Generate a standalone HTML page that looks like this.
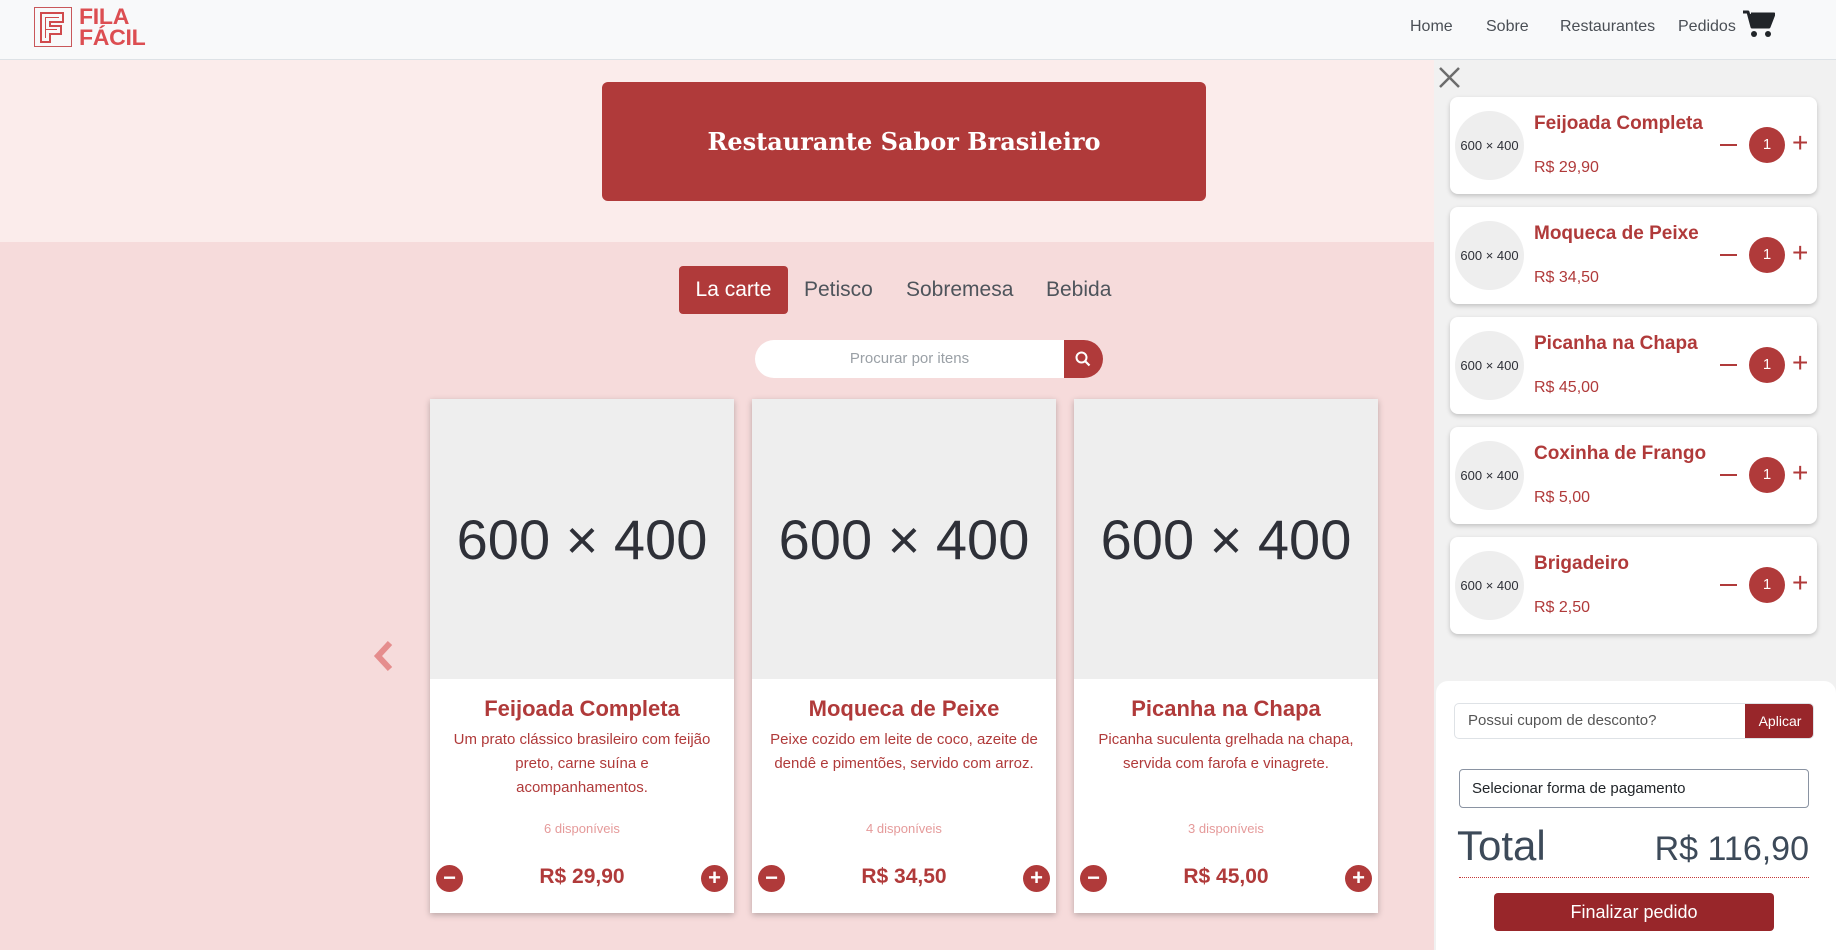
<!DOCTYPE html>
<html><head><meta charset="utf-8"><style>
*{box-sizing:border-box;margin:0;padding:0}
body{width:1836px;height:950px;overflow:hidden;font-family:"Liberation Sans",sans-serif;background:#f6dbdb;position:relative}
.abs{position:absolute}
.nav{left:0;top:0;width:1836px;height:60px;background:#f8f9fa;border-bottom:1px solid #dde2e6}
.nav a{position:absolute;top:18px;font-size:16px;color:#4a4f55}
.hero{left:0;top:60px;width:1434px;height:182px;background:#fbeceb}
.title{left:602px;top:82px;width:604px;height:119px;background:#b03a3a;border-radius:6px;color:#fff;font-family:"DejaVu Serif",serif;font-weight:bold;font-size:24px;display:flex;align-items:center;justify-content:center}
.tab{top:266px;height:48px;font-size:21px;color:#4e545b;line-height:48px}
.card{top:399px;width:304px;height:514px;background:#fff;box-shadow:0 2px 6px rgba(0,0,0,.25)}
.img{height:280px;background:#eee;color:#2e3038;font-size:56px;display:flex;align-items:center;justify-content:center}
.card h3{text-align:center;color:#b03a3a;font-size:22px;margin-top:17px}
.card p{text-align:center;color:#b03a3a;font-size:15px;line-height:24px;margin:6px 12px 0}
.card p.w{margin:6px 22px 0}
.disp{position:absolute;top:422px;width:100%;text-align:center;color:#e59a9a;font-size:13px}
.price{position:absolute;top:466px;width:100%;text-align:center;color:#b03a3a;font-size:21px;font-weight:bold}
.cb{position:absolute;top:466px;width:27px;height:27px;border-radius:50%;background:#b03a3a;color:#fff;font-size:22px;font-weight:bold;line-height:26px;text-align:center}
.side{left:1434px;top:60px;width:402px;height:890px;background:#f1f1f1}
.item{left:1450px;width:367px;height:97px;background:#fff;border-radius:8px;box-shadow:0 2px 5px rgba(0,0,0,.2)}
.item .ci{position:absolute;left:5px;top:14px;width:69px;height:69px;border-radius:50%;background:#eee;font-size:13px;color:#2e3038;display:flex;align-items:center;justify-content:center}
.item .n{position:absolute;left:84px;top:16px;font-size:19px;font-weight:bold;color:#b03a3a}
.item .p{position:absolute;left:84px;top:62px;font-size:16px;color:#b03a3a}
.item .m{position:absolute;left:270px;top:47px;width:17px;height:2px;background:#b03a3a}
.item .q{position:absolute;left:299px;top:30px;width:36px;height:36px;border-radius:50%;background:#b03a3a;color:#fff;text-align:center;line-height:36px;font-size:15px}
.item .pl{position:absolute;left:342px;top:28px;font-size:28px;color:#b03a3a;line-height:36px}
</style></head><body>
<div class="abs nav">
 <svg class="abs" style="left:34px;top:7px" width="38" height="40" viewBox="0 0 38 40"><rect x=".5" y=".5" width="37" height="39" fill="none" stroke="#c9575a"/><path d="M7 6h22v9H16v4h11v8H16v8H7z" fill="none" stroke="#d04a4d" stroke-width="2"/><path d="M11 10h14v1H12v11h11v1H12v8h-1z" fill="#d04a4d"/></svg>
 <div class="abs" style="left:79px;top:6px;font-weight:bold;font-size:22px;line-height:21px;color:#dc4e52;letter-spacing:-.3px;transform:scaleX(1.05);transform-origin:left">FILA<br>FÁCIL</div>
 <a style="left:1410px">Home</a><a style="left:1486px">Sobre</a><a style="left:1560px">Restaurantes</a><a style="left:1678px">Pedidos</a>
 <svg class="abs" style="left:1743px;top:10px" width="32" height="28" viewBox="0 0 32 28"><path d="M0 2h5l4 15h17l5-13H8" fill="#212529" stroke="#212529" stroke-width="3" stroke-linejoin="round"/><circle cx="11" cy="24" r="3" fill="#212529"/><circle cx="25" cy="24" r="3" fill="#212529"/></svg>
</div>
<div class="abs hero"></div>
<div class="abs title">Restaurante Sabor Brasileiro</div>
<div class="abs tab" style="left:679px;width:109px;background:#b03a3a;color:#fff;border-radius:4px;text-align:center">La carte</div>
<div class="abs tab" style="left:804px">Petisco</div>
<div class="abs tab" style="left:906px">Sobremesa</div>
<div class="abs tab" style="left:1046px">Bebida</div>
<div class="abs" style="left:755px;top:340px;width:348px;height:38px;background:#fff;border-radius:19px;overflow:hidden">
 <div class="abs" style="left:0;width:309px;top:10px;text-align:center;color:#9aa0a6;font-size:15px">Procurar por itens</div>
 <div class="abs" style="left:309px;top:0;width:39px;height:38px;background:#b03a3a"><svg style="margin:11px 0 0 11px" width="16" height="16" viewBox="0 0 16 16"><circle cx="6.5" cy="6.5" r="5" fill="none" stroke="#fff" stroke-width="2"/><path d="M10 10l4.5 4.5" stroke="#fff" stroke-width="2.2"/></svg></div>
</div>
<svg class="abs" style="left:372px;top:640px" width="22" height="32" viewBox="0 0 22 32"><path d="M18 3L6 16l12 13" fill="none" stroke="#e58d8d" stroke-width="6"/></svg>

<div class="abs card" style="left:430px"><div class="img">600 × 400</div><h3>Feijoada Completa</h3><p class="w">Um prato clássico brasileiro com feijão preto, carne suína e acompanhamentos.</p><div class="disp">6 disponíveis</div><div class="cb" style="left:6px">−</div><div class="price">R$ 29,90</div><div class="cb" style="right:6px">+</div></div>
<div class="abs card" style="left:752px"><div class="img">600 × 400</div><h3>Moqueca de Peixe</h3><p>Peixe cozido em leite de coco, azeite de dendê e pimentões, servido com arroz.</p><div class="disp">4 disponíveis</div><div class="cb" style="left:6px">−</div><div class="price">R$ 34,50</div><div class="cb" style="right:6px">+</div></div>
<div class="abs card" style="left:1074px"><div class="img">600 × 400</div><h3>Picanha na Chapa</h3><p>Picanha suculenta grelhada na chapa, servida com farofa e vinagrete.</p><div class="disp">3 disponíveis</div><div class="cb" style="left:6px">−</div><div class="price">R$ 45,00</div><div class="cb" style="right:6px">+</div></div>

<div class="abs side"></div>
<svg class="abs" style="left:1439px;top:67px" width="21" height="21" viewBox="0 0 21 21"><path d="M1 1l19 19M20 1L1 20" stroke="#6c6c6c" stroke-width="2.5"/></svg>
<div class="abs item" style="top:97px"><div class="ci">600 × 400</div><div class="n">Feijoada Completa</div><div class="p">R$ 29,90</div><div class="m"></div><div class="q">1</div><div class="pl">+</div></div>
<div class="abs item" style="top:207px"><div class="ci">600 × 400</div><div class="n">Moqueca de Peixe</div><div class="p">R$ 34,50</div><div class="m"></div><div class="q">1</div><div class="pl">+</div></div>
<div class="abs item" style="top:317px"><div class="ci">600 × 400</div><div class="n">Picanha na Chapa</div><div class="p">R$ 45,00</div><div class="m"></div><div class="q">1</div><div class="pl">+</div></div>
<div class="abs item" style="top:427px"><div class="ci">600 × 400</div><div class="n">Coxinha de Frango</div><div class="p">R$ 5,00</div><div class="m"></div><div class="q">1</div><div class="pl">+</div></div>
<div class="abs item" style="top:537px"><div class="ci">600 × 400</div><div class="n">Brigadeiro</div><div class="p">R$ 2,50</div><div class="m"></div><div class="q">1</div><div class="pl">+</div></div>

<div class="abs" style="left:1436px;top:681px;width:400px;height:269px;background:#fff;border-radius:12px 12px 0 0"></div>
<div class="abs" style="left:1454px;top:703px;width:360px;height:36px;border:1px solid #dee2e6;border-radius:5px;overflow:hidden;background:#fff">
 <div class="abs" style="left:13px;top:8px;font-size:15px;color:#555">Possui cupom de desconto?</div>
 <div class="abs" style="left:290px;top:0;width:70px;height:36px;background:#98262a;color:#fff;font-size:14px;line-height:35px;text-align:center">Aplicar</div>
</div>
<div class="abs" style="left:1459px;top:769px;width:350px;height:39px;border:1px solid #8a93a2;border-radius:4px;padding:10px 0 0 12px;font-size:15px;color:#212529">Selecionar forma de pagamento</div>
<div class="abs" style="left:1457px;top:822px;font-size:42px;color:#3d4a59">Total</div>
<div class="abs" style="right:27px;top:830px;font-size:34px;color:#3d4a59">R$ 116,90</div>
<div class="abs" style="left:1459px;top:877px;width:350px;border-top:1px dotted #c43a3a"></div>
<div class="abs" style="left:1494px;top:893px;width:280px;height:38px;background:#98262a;border-radius:4px;color:#fff;font-size:18px;line-height:38px;text-align:center">Finalizar pedido</div>
</body></html>
